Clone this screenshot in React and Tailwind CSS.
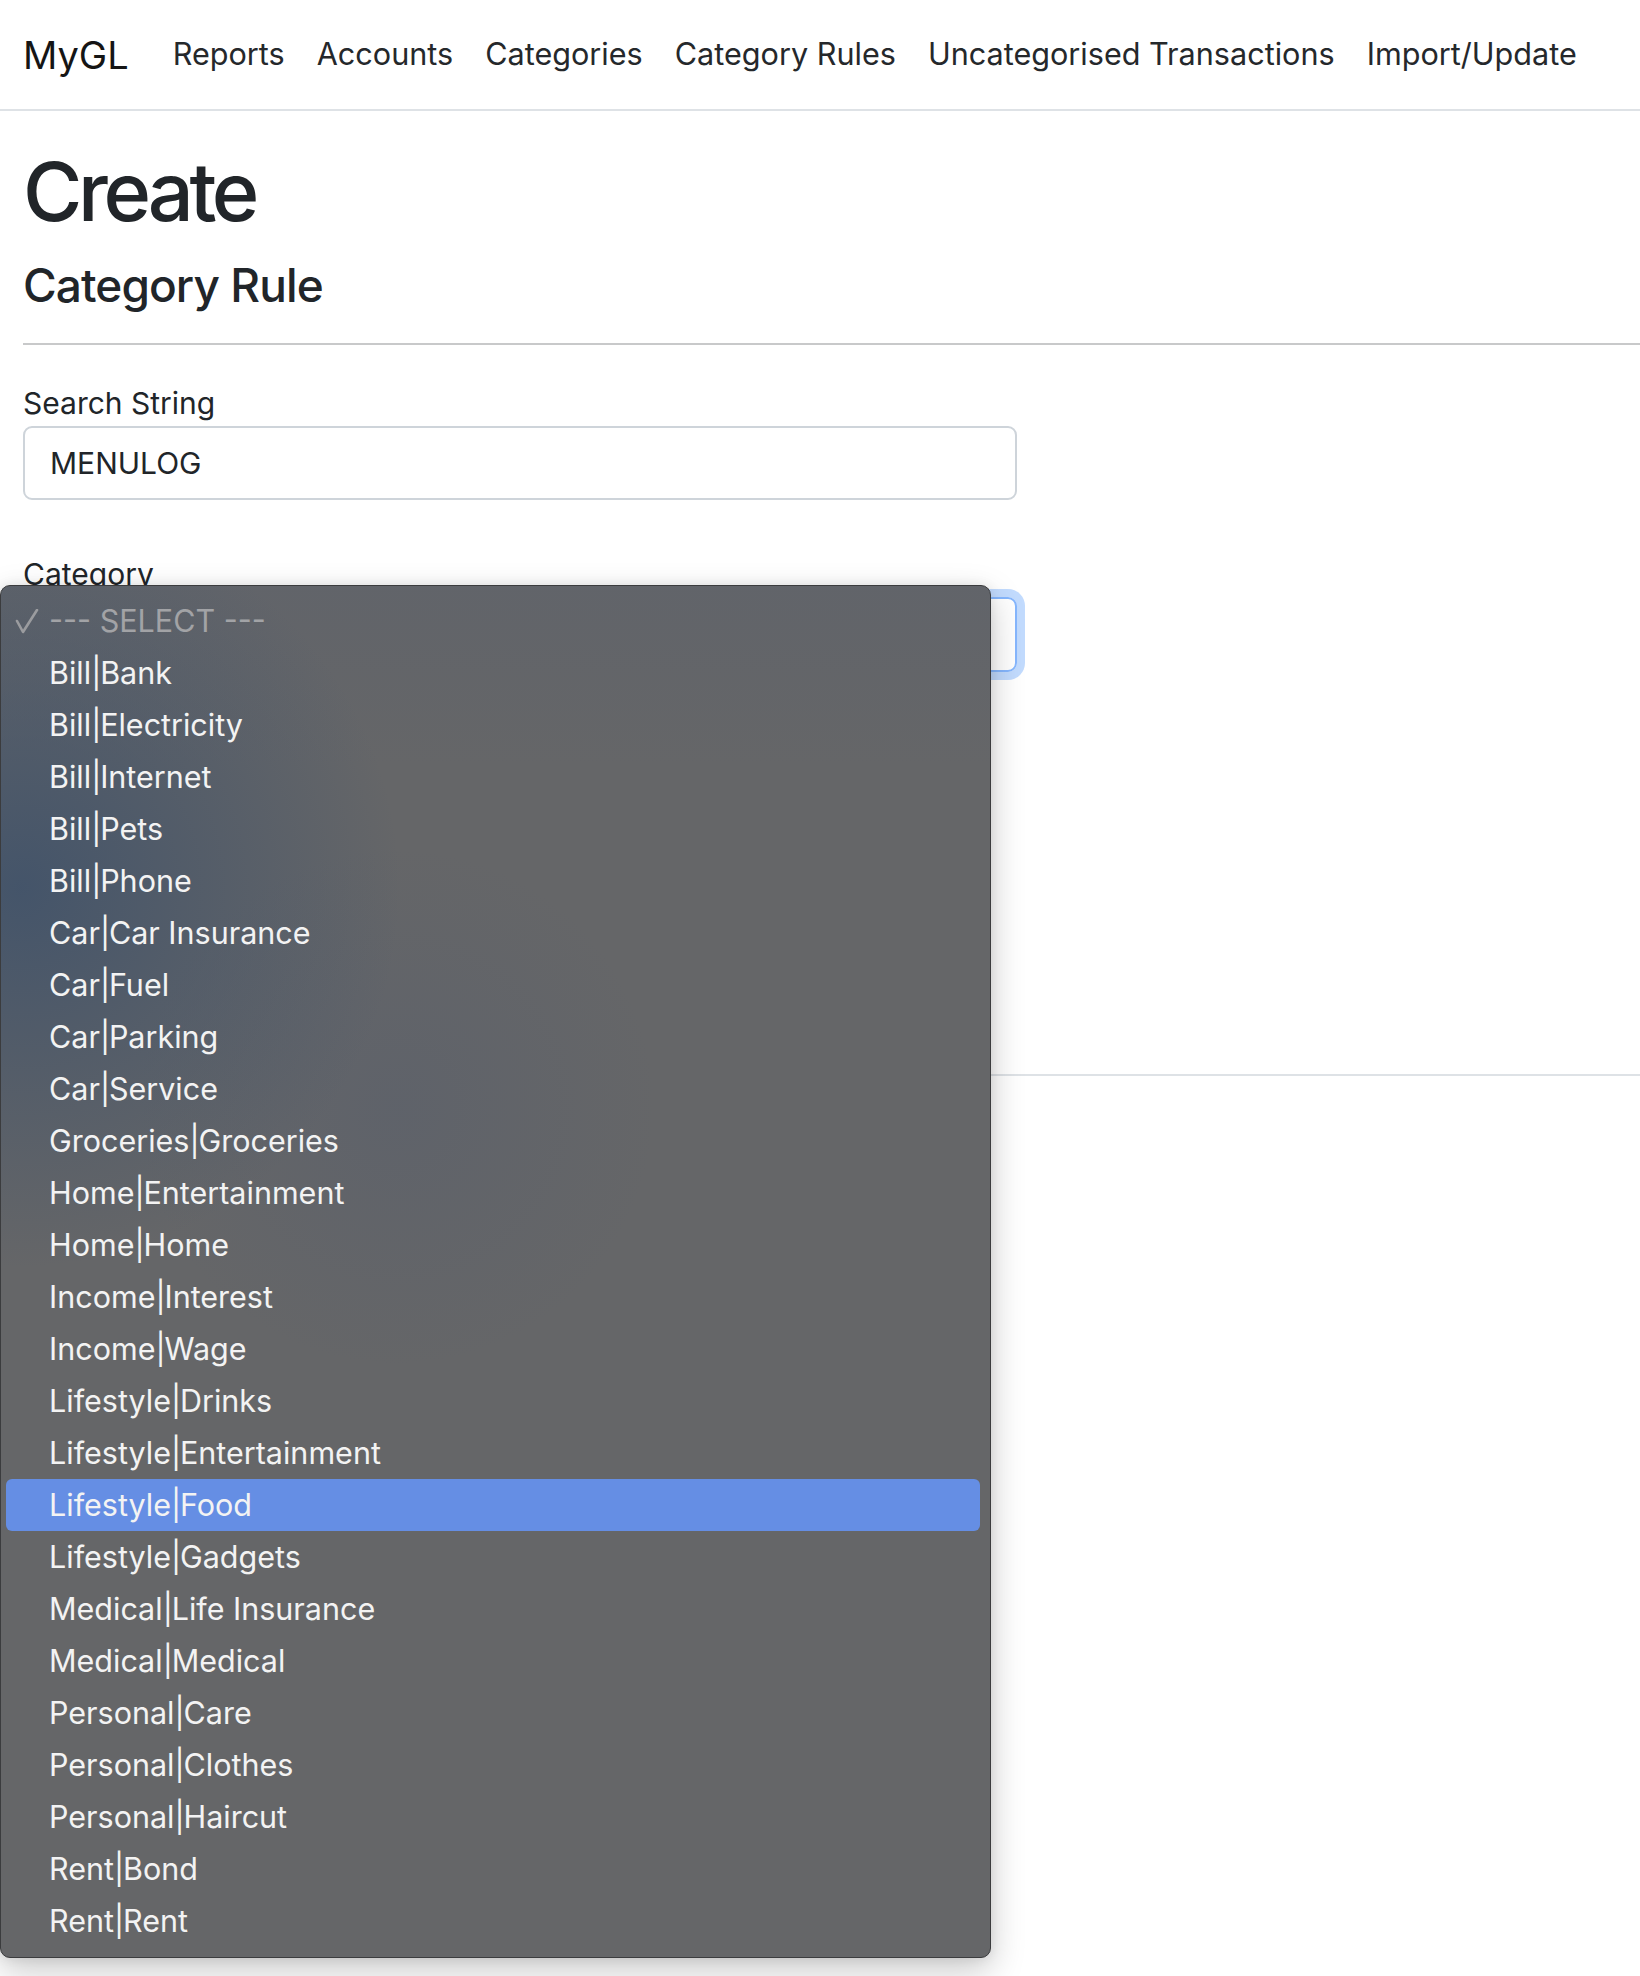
import { useState } from 'react';

const navLinks = [
    'Reports',
    'Accounts',
    'Categories',
    'Category Rules',
    'Uncategorised Transactions',
    'Import/Update',
];

const categories = [
    'Bill|Bank',
    'Bill|Electricity',
    'Bill|Internet',
    'Bill|Pets',
    'Bill|Phone',
    'Car|Car Insurance',
    'Car|Fuel',
    'Car|Parking',
    'Car|Service',
    'Groceries|Groceries',
    'Home|Entertainment',
    'Home|Home',
    'Income|Interest',
    'Income|Wage',
    'Lifestyle|Drinks',
    'Lifestyle|Entertainment',
    'Lifestyle|Food',
    'Lifestyle|Gadgets',
    'Medical|Life Insurance',
    'Medical|Medical',
    'Personal|Care',
    'Personal|Clothes',
    'Personal|Haircut',
    'Rent|Bond',
    'Rent|Rent',
];

function Navbar() {
    return (
        <nav className="h-[111px] border-b-2 border-[#dee2e6] flex items-center pl-[23px]">
            <a className="text-[38px] leading-none text-[#151515] mr-[44px]">
                MyGL
            </a>
            <ul className="flex items-center gap-[32px]">
                {navLinks.map((link) => (
                    <li
                        key={link}
                        className="text-[30.6px] leading-none text-[#25282b]"
                    >
                        {link}
                    </li>
                ))}
            </ul>
        </nav>
    );
}

// "Group|Name" with a narrow pipe like the mac menu font
function CategoryLabel({ text }) {
    const [group, name] = text.split('|');
    return (
        <span className="text-[30.5px] leading-none text-[#f3f3f3]">
            {group}
            <span className="inline-block w-[9px] text-center">|</span>
            {name}
        </span>
    );
}

// native mac select popup, drawn open over the form
function SelectPopup({ hovered }) {
    return (
        <div className="absolute left-0 top-[585px] w-[991px] rounded-[10px] border border-[#3b3c3e] bg-[#656668] bg-[radial-gradient(circle_at_2%_22%,rgba(60,80,106,0.8)_0px,rgba(62,80,104,0)_380px),radial-gradient(circle_at_40%_38%,rgba(80,90,110,0.3)_0px,rgba(80,90,110,0)_260px),linear-gradient(to_bottom,rgba(90,96,108,0.35),rgba(90,96,108,0)_180px)] pt-[9px] pb-[10px] shadow-[0_12px_34px_rgba(0,0,0,0.22),0_0_12px_rgba(0,0,0,0.08)]">
            <div className="relative h-[52px] mx-[5px] flex items-center pl-[43px]">
                <svg
                    className="absolute left-[8px] top-[14px]"
                    width="26"
                    height="26"
                    viewBox="0 0 26 26"
                >
                    <path
                        d="M3 12 L9 23 L23 1"
                        fill="none"
                        stroke="#9b9c9f"
                        strokeWidth="2.6"
                        strokeLinecap="round"
                        strokeLinejoin="round"
                    />
                </svg>
                <span className="text-[30.5px] leading-none text-[#a2a3a6]">
                    --- SELECT ---
                </span>
            </div>
            {categories.map((cat) => (
                <div
                    key={cat}
                    className={
                        cat === hovered
                            ? 'h-[52px] ml-[5px] mr-[10px] flex items-center pl-[43px] rounded-[6px] bg-[#658ee4]'
                            : 'h-[52px] ml-[5px] mr-[10px] flex items-center pl-[43px]'
                    }
                >
                    <CategoryLabel text={cat} />
                </div>
            ))}
        </div>
    );
}

export default function App() {
    const [search, setSearch] = useState('MENULOG');

    return (
        <div className="relative w-[1640px] h-[1976px] overflow-hidden bg-white font-[Inter,sans-serif] text-[#212529]">
            <Navbar />

            <main className="h-[963px] pl-[23px] pt-[41px]">
                <h1 className="text-[81px] leading-none font-medium tracking-[-0.053em]">
                    Create
                </h1>
                <h4 className="mt-[29px] text-[46px] leading-none font-medium tracking-[-0.02em]">
                    Category Rule
                </h4>
                <hr className="mt-[35px] border-t-2 border-[#c8c9ca]" />

                <form className="w-[994px]">
                    <div>
                        <label className="block mt-[43px] text-[30px] leading-none">
                            Search String
                        </label>
                        <input
                            type="text"
                            value={search}
                            onChange={(e) => setSearch(e.target.value)}
                            className="mt-[8px] w-full h-[74px] border-2 border-[#ced4da] rounded-[9px] pl-[25px] text-[30px] text-[#212529] outline-none"
                        />
                    </div>

                    <div>
                        <label className="block mt-[59px] text-[30px] leading-none">
                            Category
                        </label>
                        <div className="mt-[8px] w-full h-[75px] border-2 border-[#86b7fe] rounded-[9px] shadow-[0_0_0_8px_rgba(13,110,253,0.25)]" />
                    </div>

                    <div className="mt-[45px]">
                        <button
                            type="submit"
                            className="h-[72px] px-[24px] rounded-[9px] bg-[#0d6efd] text-white text-[30px]"
                        >
                            Create
                        </button>
                    </div>
                    <div className="mt-[30px] text-[30px] text-[#0d6efd] underline">
                        Back to List
                    </div>
                </form>
            </main>

            <footer className="border-t-2 border-[#dee2e6] pl-[23px] pt-[30px] text-[26px] text-[#6c757d]">
                © 2024 - MyGL
            </footer>

            <SelectPopup hovered="Lifestyle|Food" />
        </div>
    );
}
